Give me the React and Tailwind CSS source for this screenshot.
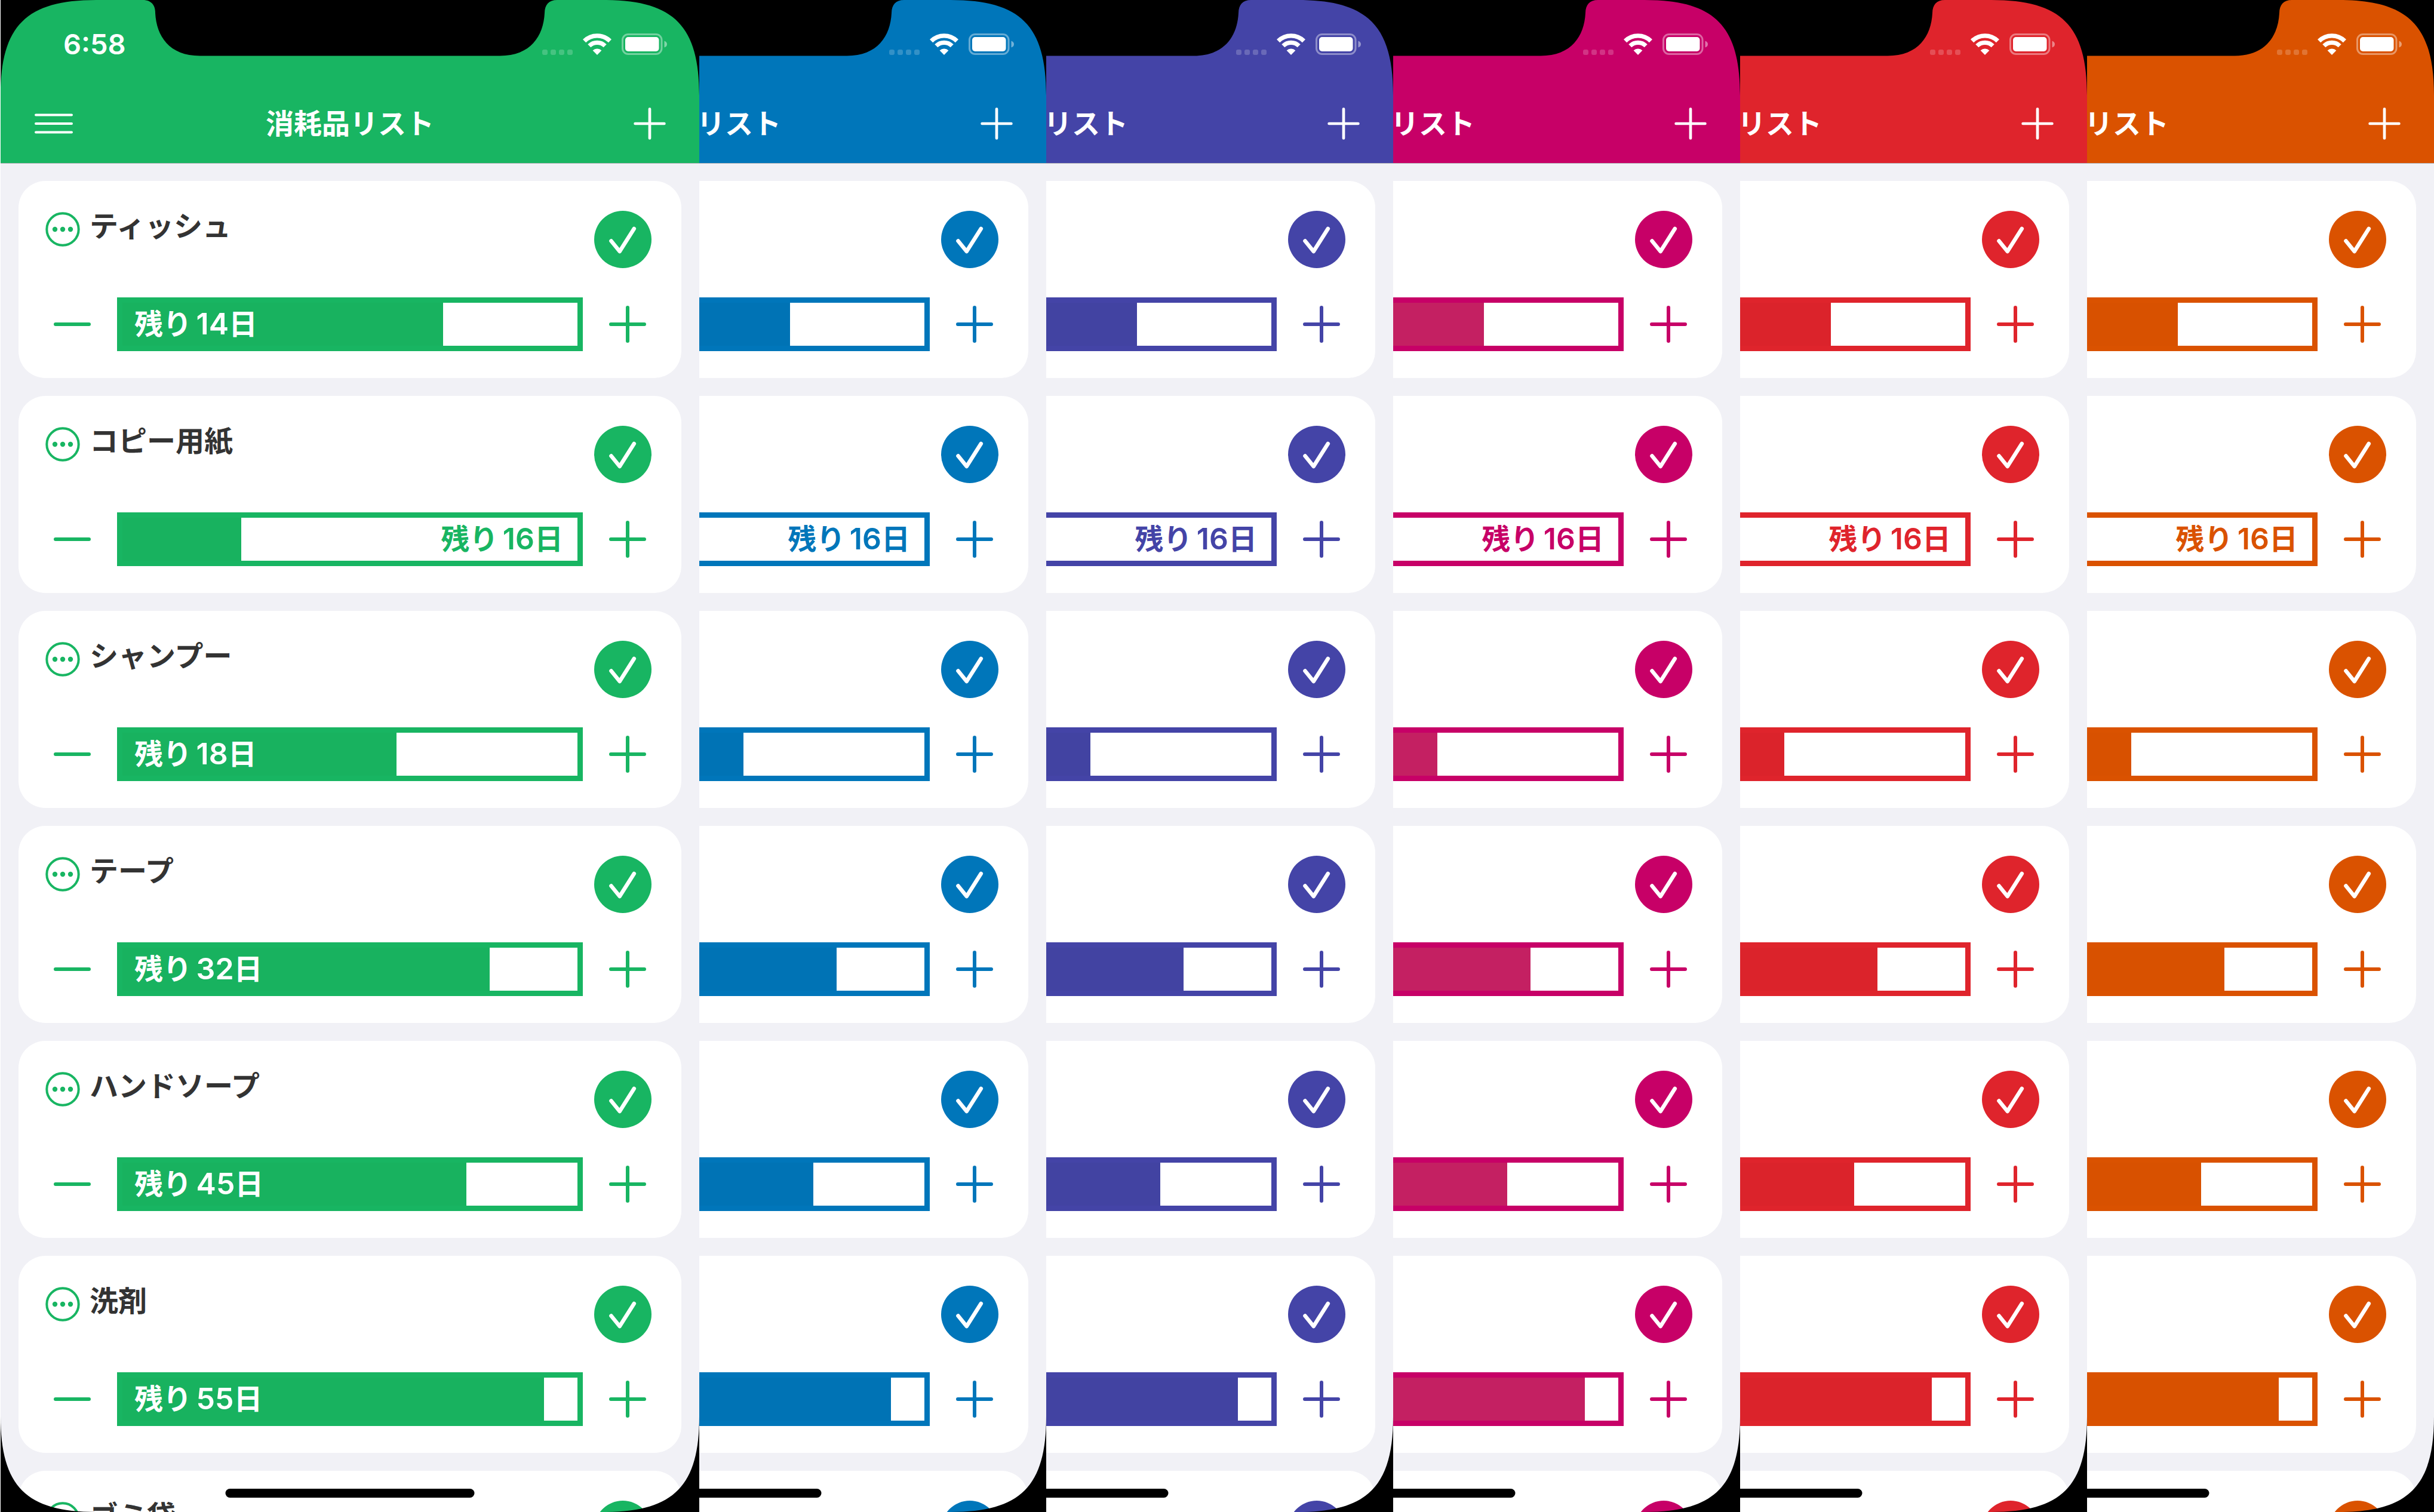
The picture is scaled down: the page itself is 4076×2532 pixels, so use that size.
const ITEMS = [
  { name: 'ティッシュ', days: 14, total: 20 },
  { name: 'コピー用紙', days: 16, total: 60 },
  { name: 'シャンプー', days: 18, total: 30 },
  { name: 'テープ', days: 32, total: 40 },
  { name: 'ハンドソープ', days: 45, total: 60 },
  { name: '洗剤', days: 55, total: 60 },
  { name: 'ゴミ袋', days: 60, total: 90 },
];

const THEMES = [
  { id: 'green', bg: 'bg-[#18b562]', text: 'text-[#18b562]', border: 'border-[#18b562]', fill: 'bg-[#18b25f]' },
  { id: 'blue', bg: 'bg-[#0076ba]', text: 'text-[#0076ba]', border: 'border-[#0076ba]', fill: 'bg-[#0073b5]' },
  { id: 'purple', bg: 'bg-[#4444a7]', text: 'text-[#4444a7]', border: 'border-[#4444a7]', fill: 'bg-[#4243a2]' },
  { id: 'pink', bg: 'bg-[#c70067]', text: 'text-[#c70067]', border: 'border-[#c70067]', fill: 'bg-[#c42062]' },
  { id: 'red', bg: 'bg-[#df242c]', text: 'text-[#df242c]', border: 'border-[#df242c]', fill: 'bg-[#db232b]' },
  { id: 'orange', bg: 'bg-[#da5200]', text: 'text-[#da5200]', border: 'border-[#da5200]', fill: 'bg-[#d85100]' },
];

function PlusIcon({ className, weight }) {
  return (
    <svg viewBox="0 0 62 62" className={className} fill="none" stroke="currentColor" strokeWidth={weight} strokeLinecap="round" aria-hidden="true">
      <path d="M3 31H59M31 3V59" />
    </svg>
  );
}

function MinusIcon() {
  return (
    <svg viewBox="0 0 62 62" className="size-[62px]" fill="none" stroke="currentColor" strokeWidth="6" strokeLinecap="round" aria-hidden="true">
      <path d="M3 31H59" />
    </svg>
  );
}

function MoreIcon() {
  return (
    <svg viewBox="0 0 58 58" className="size-[58px]" fill="none" aria-hidden="true">
      <circle cx="29" cy="29" r="26.7" stroke="currentColor" strokeWidth="4" />
      <g fill="currentColor">
        <circle cx="16" cy="29" r="4.2" />
        <circle cx="29" cy="29" r="4.2" />
        <circle cx="42" cy="29" r="4.2" />
      </g>
    </svg>
  );
}

function CheckCircleIcon() {
  return (
    <svg viewBox="0 0 96 96" className="size-24" fill="none" aria-hidden="true">
      <circle cx="48" cy="48" r="48" fill="currentColor" />
      <path d="M28.5 50.5L42.7 68L66.8 30" stroke="#fff" strokeWidth="6.6" strokeLinecap="round" strokeLinejoin="round" />
    </svg>
  );
}

function WifiIcon() {
  return (
    <svg viewBox="0 0 48 36" className="h-9 w-12" fill="none" aria-hidden="true">
      <path d="M2.6 12.6A30.5 30.5 0 0 1 45.4 12.6" stroke="#fff" strokeWidth="7.4" />
      <path d="M10.8 20.8A18.8 18.8 0 0 1 37.2 20.8" stroke="#fff" strokeWidth="7.2" />
      <path d="M16.6 28.4A10.6 10.6 0 0 1 31.4 28.4L24 36Z" fill="#fff" />
    </svg>
  );
}

function BatteryIcon() {
  return (
    <svg viewBox="0 0 76 36" className="h-9 w-[76px]" fill="none" aria-hidden="true">
      <rect x="1.5" y="1.5" width="65.5" height="33" rx="9.5" stroke="#fff" strokeOpacity="0.4" strokeWidth="3" />
      <rect x="6" y="6" width="56.5" height="24" rx="5" fill="#fff" />
      <path d="M71.5 12.5Q76 14 76 18T71.5 23.5Z" fill="#fff" fillOpacity="0.45" />
    </svg>
  );
}

function StatusBar() {
  return (
    <div className="flex h-[141px] items-start justify-between pt-14 pr-[54px] pl-[105px]">
      <time className="text-[47px] leading-9 font-semibold">6:58</time>
      <div className="flex h-9 items-end">
        <div className="mr-[17px] flex gap-[5px]">
          {[0, 1, 2, 3].map((dot) => (
            <span key={dot} className="size-[9px] rounded-[3px] bg-white/20" />
          ))}
        </div>
        <WifiIcon />
        <div className="ml-[17px]">
          <BatteryIcon />
        </div>
      </div>
    </div>
  );
}

function NavBar() {
  return (
    <div className="grid h-[132px] grid-cols-[1fr_auto_1fr] items-center px-14">
      <button type="button" aria-label="メニュー" className="justify-self-start">
        <svg viewBox="0 0 66 36" className="h-9 w-[66px]" fill="none" stroke="currentColor" strokeWidth="4" strokeLinecap="round" aria-hidden="true">
          <path d="M3 3.5H63M3 18H63M3 32.5H63" />
        </svg>
      </button>
      <h1 className="text-[47px] leading-[60px] font-semibold">消耗品リスト</h1>
      <button type="button" aria-label="追加" className="justify-self-end">
        <PlusIcon className="size-[54px]" weight={5.4} />
      </button>
    </div>
  );
}

function ItemCard({ item, theme }) {
  const ratio = item.days / item.total;
  const labelOnFill = ratio > 0.5;
  return (
    <li className="flex h-[330px] shrink-0 flex-col justify-between rounded-[45px] bg-white pt-[50px] pb-[45px]">
      <div className="flex items-start justify-between pr-[50px] pl-[45px]">
        <div className="flex h-[62px] items-center gap-4">
          <button type="button" aria-label={item.name + 'の詳細'} className={theme.text}>
            <MoreIcon />
          </button>
          <h2 className="pb-2.5 text-[48px] leading-[52px] font-semibold text-[#333333]">{item.name}</h2>
        </div>
        <button type="button" aria-label={item.name + 'を補充'} className={theme.text}>
          <CheckCircleIcon />
        </button>
      </div>
      <div className="flex items-center gap-[15px] px-[30px]">
        <button type="button" aria-label="減らす" className={'flex h-[90px] w-[120px] items-center justify-center ' + theme.text}>
          <MinusIcon />
        </button>
        <div
          role="progressbar"
          aria-label={item.name}
          aria-valuenow={item.days}
          aria-valuemax={item.total}
          className="grid h-[90px] flex-1 bg-white"
        >
          <div className={'col-start-1 row-start-1 ' + theme.fill} style={{ width: ratio * 100 + '%' }} />
          <div
            className={
              'col-start-1 row-start-1 flex items-center border-[9px] pt-1 pr-6 pl-5 ' +
              theme.border +
              (labelOnFill ? ' justify-start text-white' : ' justify-end ' + theme.text)
            }
          >
            <p className="text-[48px] leading-[60px] font-semibold whitespace-pre">
              残り<span className="text-[30px]"> </span>
              <span className="text-[50px]">{item.days}</span>日
            </p>
          </div>
        </div>
        <button type="button" aria-label="増やす" className={'flex h-[90px] w-[120px] items-center justify-center ' + theme.text}>
          <PlusIcon className="size-[62px]" weight={6} />
        </button>
      </div>
    </li>
  );
}

function Bezel() {
  return (
    <>
      <svg viewBox="0 0 1170 162" className="pointer-events-none absolute inset-x-0 top-0" aria-hidden="true">
        <path d="M0 0H160C43 0 0 43 0 160Z" />
        <path d="M1170 0H1010C1127 0 1170 43 1170 160Z" />
        <path d="M238 0C252 0 259 8 259 22C261 60 282 93.500 334 93.500H836C888 93.500 909 60 911 22C911 8 918 0 932 0Z" />
      </svg>
      <svg viewBox="0 0 1170 162" className="pointer-events-none absolute inset-x-0 bottom-0" aria-hidden="true">
        <path d="M0 162H160C43 162 0 119 0 2Z" />
        <path d="M1170 162H1010C1127 162 1170 119 1170 2Z" />
      </svg>
      <div className="absolute bottom-6 left-1/2 h-[15px] w-[417px] -translate-x-1/2 rounded-full bg-black" />
    </>
  );
}

function Phone({ theme }) {
  return (
    <article className="relative flex h-full w-[1170px] shrink-0 flex-col overflow-hidden bg-[#f1f1f6]">
      <header className={'shrink-0 text-white ' + theme.bg}>
        <StatusBar />
        <NavBar />
      </header>
      <ul className="flex min-h-0 flex-1 flex-col gap-[30px] overflow-hidden border-t border-[#b4b4b8] px-[30px] pt-[29px]">
        {ITEMS.map((item) => (
          <ItemCard key={item.name} item={item} theme={theme} />
        ))}
      </ul>
      <Bezel />
    </article>
  );
}

export default function App() {
  return (
    <main className="flex h-screen overflow-hidden bg-white font-['Inter','Noto_Sans_CJK_JP',sans-serif]">
      {THEMES.map((theme, index) => (
        <section
          key={theme.id}
          aria-label={theme.id}
          className={index === 0 ? 'flex shrink-0 overflow-hidden pl-px' : 'flex min-w-0 flex-1 justify-end overflow-hidden'}
        >
          <Phone theme={theme} />
        </section>
      ))}
    </main>
  );
}
